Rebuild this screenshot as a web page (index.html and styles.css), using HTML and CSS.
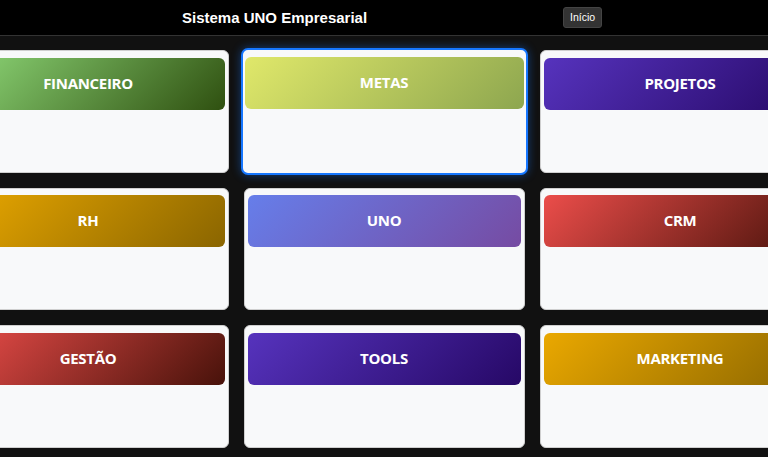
FILE: index.html
```html
<!DOCTYPE html>
<html lang="pt-BR">
<head>
<meta charset="utf-8">
<title>Sistema UNO Empresarial</title>
<link rel="stylesheet" href="styles.css">
</head>
<body>
<header class="topbar">
  <h1 class="title">Sistema UNO Empresarial</h1>
  <button class="home-btn" type="button">Início</button>
</header>
<main class="grid">
  <section class="card"><div class="card-head g-green">FINANCEIRO</div></section>
  <section class="card card-active"><div class="card-head g-lime">METAS</div></section>
  <section class="card"><div class="card-head g-purple">PROJETOS</div></section>
  <section class="card"><div class="card-head g-gold">RH</div></section>
  <section class="card"><div class="card-head g-uno">UNO</div></section>
  <section class="card"><div class="card-head g-red">CRM</div></section>
  <section class="card"><div class="card-head g-red">GESTÃO</div></section>
  <section class="card"><div class="card-head g-purple">TOOLS</div></section>
  <section class="card"><div class="card-head g-gold">MARKETING</div></section>
</main>
</body>
</html>
```

FILE: styles.css
```css
* { box-sizing: border-box; }
html, body {
  margin: 0;
  height: 100%;
  background: #111111;
  overflow: hidden;
}
body {
  font-family: "Liberation Sans", Arial, sans-serif;
}
.topbar {
  height: 36px;
  background: #000;
  border-bottom: 1px solid #333;
  display: flex;
  align-items: center;
  padding-left: 182px;
  gap: 196px;
}
.title {
  margin: 0;
  color: #fff;
  font-size: 15px;
  font-weight: 700;
  white-space: nowrap;
}
.home-btn {
  height: 21px;
  padding: 0 6px;
  background: #333;
  color: #fff;
  border: 1px solid #444;
  border-radius: 3px;
  font-family: "Liberation Sans", Arial, sans-serif;
  font-size: 10.5px;
  margin-top: -1px;
}
.grid {
  display: grid;
  grid-template-columns: repeat(3, 281px);
  grid-auto-rows: 122.5px;
  justify-content: center;
  column-gap: 15px;
  row-gap: 15px;
  padding-top: 14px;
}
.card {
  background: #f8f9fa;
  border: 1px solid #cfcfcf;
  border-radius: 6px;
  padding: 6.5px 3px 0;
}
.card-active {
  margin: -2px -3px;
  border: 2px solid #1677ff;
  padding: 6.5px 2px 0;
  border-radius: 7px;
  box-shadow: 0 0 10px rgba(22, 119, 255, 0.45);
}
.card-head {
  height: 52px;
  padding-bottom: 2px;
  border-radius: 6px;
  display: flex;
  align-items: center;
  justify-content: center;
  color: #fff;
  font-family: "Open Sans", "Noto Sans", sans-serif;
  font-weight: 700;
  font-size: 15px;
  letter-spacing: -0.3px;
}
.g-green { background: linear-gradient(135deg, #8fd979 0%, #2f5010 100%); }
.g-lime { background: linear-gradient(135deg, #e0e86a 0%, #8da64f 100%); }
.g-purple { background: linear-gradient(135deg, #5633bd 0%, #260866 100%); }
.g-gold { background: linear-gradient(135deg, #eaa800 0%, #8a6500 100%); }
.g-uno { background: linear-gradient(135deg, #667eea 0%, #764ba2 100%); }
.g-red { background: linear-gradient(135deg, #eb4d4a 0%, #48120a 100%); }
```
